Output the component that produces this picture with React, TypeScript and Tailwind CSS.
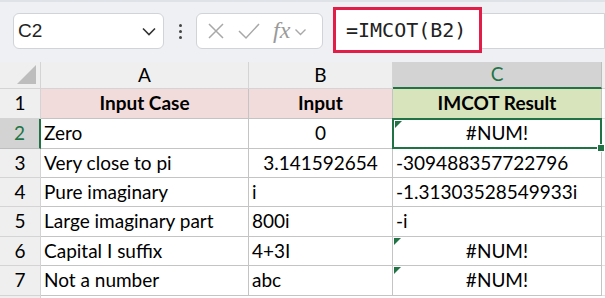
import React from 'react';

const cellFont = { fontFamily: 'Lato, "Liberation Sans", sans-serif' };

type Row = {
  n: number;
  h: string;
  a: string;
  b: string;
  bAlign: 'left' | 'center';
  c: string;
  cAlign: 'left' | 'center';
  flag?: boolean;
};

const rows: Row[] = [
  { n: 2, h: 'h-[30px]', a: 'Zero', b: '0', bAlign: 'center', c: '#NUM!', cAlign: 'center', flag: true },
  { n: 3, h: 'h-[29px]', a: 'Very close to pi', b: '3.141592654', bAlign: 'center', c: '-309488357722796', cAlign: 'left' },
  { n: 4, h: 'h-[29px]', a: 'Pure imaginary', b: 'i', bAlign: 'left', c: '-1.31303528549933i', cAlign: 'left' },
  { n: 5, h: 'h-[30px]', a: 'Large imaginary part', b: '800i', bAlign: 'left', c: '-i', cAlign: 'left' },
  { n: 6, h: 'h-[29px]', a: 'Capital I suffix', b: '4+3I', bAlign: 'left', c: '#NUM!', cAlign: 'center', flag: true },
  { n: 7, h: 'h-[30px]', a: 'Not a number', b: 'abc', bAlign: 'left', c: '#NUM!', cAlign: 'center', flag: true },
];

function Flag() {
  return (
    <svg className="absolute left-[1px] top-[1px]" width="7" height="7" viewBox="0 0 7 7">
      <polygon points="0,0 7,0 0,7" fill="#217346" />
    </svg>
  );
}

function Toolbar() {
  return (
    <div className="relative h-[62px] bg-[#eef0f3] border-t-[2px] border-[#dfe2e6]">
      <div className="flex items-center h-full pb-[2px]">
        {/* name box */}
        <div className="ml-[13px] w-[151px] h-[36px] bg-white border border-[#d0d3d7] rounded-[6px] flex items-center justify-between pl-[4px] pr-[6px]">
          <span className="text-[19px] text-[#222]" style={{ fontFamily: '"Liberation Sans", sans-serif' }}>C2</span>
          <svg width="16" height="16" viewBox="0 0 16 16">
            <path d="M2 5.5 L8 11.5 L14 5.5" fill="none" stroke="#333" strokeWidth="1.6" />
          </svg>
        </div>
        {/* dots */}
        <div className="w-[32px] flex flex-col items-center gap-[3px]">
          <span className="w-[3px] h-[3px] rounded-full bg-[#444]" />
          <span className="w-[3px] h-[3px] rounded-full bg-[#444]" />
          <span className="w-[3px] h-[3px] rounded-full bg-[#444]" />
        </div>
        {/* x check fx */}
        <div className="w-[127px] h-[36px] bg-white border border-[#d0d3d7] rounded-[6px] flex items-center pl-[9px]">
          <svg width="20" height="20" viewBox="0 0 20 20">
            <path d="M3 3 L17 17 M17 3 L3 17" stroke="#a8a8a8" strokeWidth="1.5" />
          </svg>
          <svg className="ml-[11px]" width="24" height="20" viewBox="0 0 24 20">
            <path d="M2 10 L9 17 L22 3" fill="none" stroke="#a8a8a8" strokeWidth="1.5" />
          </svg>
          <span className="ml-[12px] text-[24px] italic text-[#9a9a9a] leading-none -mt-[3px]" style={{ fontFamily: '"Liberation Serif", serif' }}>fx</span>
          <svg className="ml-[4px]" width="13" height="13" viewBox="0 0 13 13">
            <path d="M1.5 4.5 L6.5 9.5 L11.5 4.5" fill="none" stroke="#a8a8a8" strokeWidth="1.4" />
          </svg>
        </div>
        {/* formula bar */}
        <div className="ml-[11px] flex-1 h-[36px] bg-white border border-[#d0d3d7] rounded-l-[6px]" />
      </div>
      <div className="absolute left-[333px] top-[5px] w-[149px] h-[46px] border-[3px] border-[#e11d48] bg-white flex items-center pl-[10px]">
        <span className="text-[20px] text-[#222]" style={{ fontFamily: '"DejaVu Sans Mono", "Liberation Mono", monospace' }}>=IMCOT(B2)</span>
      </div>
    </div>
  );
}

function ColumnHeader() {
  return (
    <div className="flex h-[27px] text-[19px] text-black" style={cellFont}>
      <div className="relative w-[41px] shrink-0 bg-[#efefef] border-r border-b border-[#d4d4d4]">
        <svg className="absolute right-[4px] bottom-[4px]" width="19" height="19" viewBox="0 0 19 19">
          <polygon points="19,0 19,19 0,19" fill="#bdbdbd" />
        </svg>
      </div>
      <div className="w-[208px] shrink-0 bg-[#efefef] border-r border-b border-[#d4d4d4] flex items-center justify-center">A</div>
      <div className="w-[144px] shrink-0 bg-[#efefef] border-r border-b border-[#d4d4d4] flex items-center justify-center">B</div>
      <div className="w-[209px] shrink-0 bg-[#d3d3d3] border-r border-[#bdbdbd] border-b-[2px] border-b-[#217346] flex items-center justify-center text-[#217346]">C</div>
      <div className="flex-1 bg-[#efefef] border-b border-[#d4d4d4]" />
    </div>
  );
}

function HeaderRow() {
  return (
    <div className="flex h-[30px] text-[19px] font-bold text-black" style={cellFont}>
      <div className="w-[41px] shrink-0 bg-[#efefef] border-r border-b border-[#d4d4d4] flex items-center justify-center font-normal">1</div>
      <div className="w-[208px] shrink-0 bg-[#f2dcdb] border-r border-b border-[#c4c4c4] flex items-center justify-center">Input Case</div>
      <div className="w-[144px] shrink-0 bg-[#f2dcdb] border-r border-b border-[#c4c4c4] flex items-center justify-center">Input</div>
      <div className="w-[209px] shrink-0 bg-[#d8e4bc] border-r border-b border-[#c4c4c4] flex items-center justify-center">IMCOT Result</div>
      <div className="flex-1 bg-white border-b border-[#e1e1e1]" />
    </div>
  );
}

function DataRow({ r }: { r: Row }) {
  const selected = r.n === 2;
  return (
    <div className={`flex ${r.h} text-[19px] text-black`} style={cellFont}>
      <div
        className={
          selected
            ? 'w-[41px] shrink-0 bg-[#d3d3d3] border-r-[2px] border-r-[#217346] border-b border-b-[#bdbdbd] flex items-center justify-center text-[#217346]'
            : 'w-[41px] shrink-0 bg-[#efefef] border-r border-b border-[#d4d4d4] flex items-center justify-center'
        }
      >
        {r.n}
      </div>
      <div className="w-[208px] shrink-0 bg-white border-r border-b border-[#c4c4c4] flex items-center pl-[3px]">{r.a}</div>
      <div
        className={`w-[144px] shrink-0 bg-white border-r border-b border-[#c4c4c4] flex items-center ${
          r.bAlign === 'center' ? 'justify-center' : 'pl-[3px]'
        }`}
      >
        {r.b}
      </div>
      <div
        className={`relative w-[209px] shrink-0 bg-white flex items-center ${
          selected ? 'border-2 border-[#217346] -mt-[1px] -ml-[1px] w-[210px] h-[31px] z-10' : 'border-r border-b border-[#c4c4c4]'
        } ${r.cAlign === 'center' ? 'justify-center' : 'pl-[3px]'}`}
      >
        {r.flag && <Flag />}
        {r.c}
        {selected && <div className="absolute right-[-5px] bottom-[-5px] w-[8px] h-[8px] bg-[#217346] border border-white" />}
      </div>
      <div className="flex-1 bg-white border-b border-[#e1e1e1]" />
    </div>
  );
}

export default function App() {
  return (
    <div className="w-[605px] h-[298px] overflow-hidden bg-white">
      <Toolbar />
      <ColumnHeader />
      <HeaderRow />
      {rows.map((r) => (
        <DataRow key={r.n} r={r} />
      ))}
      <div className="flex h-[20px]">
        <div className="w-[41px] shrink-0 bg-[#efefef] border-r border-[#d4d4d4]" />
        <div className="flex-1 bg-white" />
      </div>
    </div>
  );
}
